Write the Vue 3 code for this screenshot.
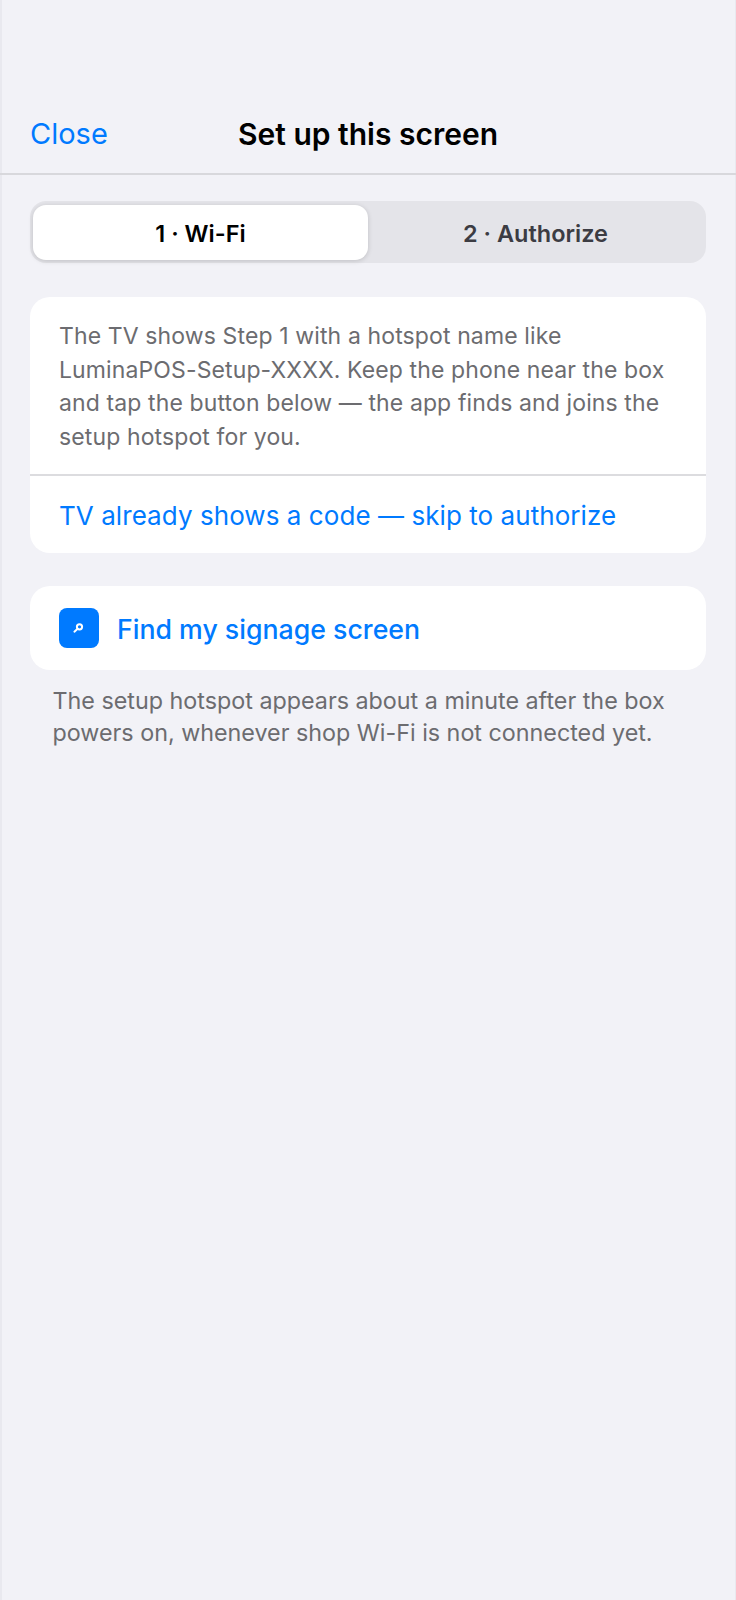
<template>
  <div class="page">
    <header class="nav">
      <a class="close">Close</a>
      <h1 class="title">Set up this screen</h1>
    </header>

    <main class="content">
      <div class="segments">
        <button class="segment active">1 · Wi-Fi</button>
        <button class="segment">2 · Authorize</button>
      </div>

      <section class="card intro">
        <p class="body">
          The TV shows Step 1 with a hotspot name like
          LuminaPOS-Setup-XXXX. Keep the phone near the box and tap the
          button below — the app finds and joins the setup hotspot for you.
        </p>
        <a class="skip">TV already shows a code — skip to authorize</a>
      </section>

      <section class="card find">
        <span class="icon">
          <svg width="40" height="40" viewBox="0 0 40 40">
            <circle cx="20.5" cy="18.8" r="2.6" fill="none" stroke="#fff" stroke-width="2" />
            <path d="M18.6 20.8 15.4 23.7" stroke="#fff" stroke-width="2" stroke-linecap="round" />
          </svg>
        </span>
        <span class="find-label">Find my signage screen</span>
      </section>
      <p class="hint">
        The setup hotspot appears about a minute after the box powers on,
        whenever shop Wi-Fi is not connected yet.
      </p>
    </main>
  </div>
</template>

<script setup>
</script>

<style>
html,
body {
  background: #f2f2f7;
}
</style>

<style scoped>
.page {
  min-height: 1600px;
  background: #f2f2f7;
  box-shadow: inset 2px 0 0 #e9e9ef, inset -1px 0 0 #e9e9ef;
  font-family: Inter, "Liberation Sans", sans-serif;
  color: #000;
}

.nav {
  height: 175px;
  box-sizing: border-box;
  padding-top: 116px;
  border-bottom: 2px solid #d8d8dc;
  position: relative;
  text-align: center;
}

.close {
  position: absolute;
  left: 30px;
  top: 116px;
  font-size: 29px;
  line-height: 36px;
  color: #007aff;
}

.title {
  margin: 0;
  font-size: 30px;
  line-height: 36px;
  font-weight: 600;
}

.content {
  padding: 26px 30px 0;
}

.segments {
  display: flex;
  height: 62px;
  box-sizing: border-box;
  padding: 4px 3px 3px;
  background: #e4e4e9;
  border-radius: 16px;
}

.segment {
  flex: 1;
  border: 0;
  padding: 2px 0 0;
  background: none;
  border-radius: 13px;
  font-family: inherit;
  font-size: 23.5px;
  font-weight: 600;
  color: #3c3c43;
}

.segment.active {
  background: #fff;
  color: #000;
  box-shadow: 0 1px 5px rgba(0, 0, 0, 0.16);
}

.card {
  background: #fff;
  border-radius: 20px;
}

.intro {
  margin-top: 34px;
}

.body {
  margin: 0;
  padding: 23px 28px 20px 29px;
  font-size: 23px;
  letter-spacing: 0.12px;
  line-height: 33.5px;
  color: #6c6c70;
  border-bottom: 2px solid #dcdcdf;
}

.skip {
  display: block;
  padding: 22px 29px 19px;
  font-size: 26px;
  letter-spacing: 0.06px;
  line-height: 36px;
  color: #007aff;
}

.find {
  margin-top: 33px;
  height: 84px;
  box-sizing: border-box;
  padding: 0 29px;
  display: flex;
  align-items: center;
  gap: 18px;
}

.icon {
  width: 40px;
  height: 40px;
  border-radius: 8px;
  background: #007aff;
}

.icon svg {
  display: block;
}

.find-label {
  padding-top: 1px;
  font-size: 26.7px;
  font-weight: 500;
  color: #007aff;
}

.hint {
  margin: 15px 22px 0 22.5px;
  font-size: 23.3px;
  line-height: 32px;
  color: #6c6c70;
}
</style>
